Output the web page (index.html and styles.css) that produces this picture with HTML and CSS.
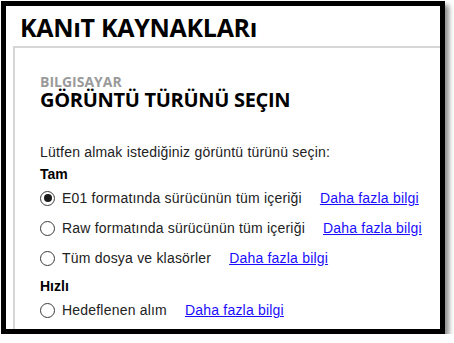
FILE: index.html
```html
<!DOCTYPE html>
<html lang="tr">
<head>
  <meta charset="UTF-8" />
  <title>Kanıt Kaynakları</title>
  <link rel="stylesheet" href="styles.css">
</head>
<body>
  <div class="frame">
    <h1 class="title">KANıT KAYNAKLARı</h1>

    <div class="panel">
      <div class="eyebrow">BILGISAYAR</div>
      <h2 class="heading">GÖRÜNTÜ TÜRÜNÜ SEÇIN</h2>

      <p class="prompt">Lütfen almak istediğiniz görüntü türünü seçin:</p>

      <div class="group">Tam</div>
      <label class="option">
        <span class="radio checked"></span>
        <span class="label">E01 formatında sürücünün tüm içeriği</span>
        <a href="#">Daha fazla bilgi</a>
      </label>
      <label class="option">
        <span class="radio"></span>
        <span class="label">Raw formatında sürücünün tüm içeriği</span>
        <a href="#">Daha fazla bilgi</a>
      </label>
      <label class="option">
        <span class="radio"></span>
        <span class="label">Tüm dosya ve klasörler</span>
        <a href="#">Daha fazla bilgi</a>
      </label>

      <div class="group">Hızlı</div>
      <label class="option">
        <span class="radio"></span>
        <span class="label">Hedeflenen alım</span>
        <a href="#">Daha fazla bilgi</a>
      </label>
    </div>
  </div>
</body>
</html>
```

FILE: styles.css
```css
body {
  margin: 0;
  background: #fff;
  font-family: "Liberation Sans", Arial, sans-serif;
}
.frame {
  margin: 1px 0 0 1px;
  width: 434px;
  height: 323px;
  border: 5px solid #000;
  background: #fff;
  box-shadow: 4px 4px 5px rgba(0,0,0,0.45);
  overflow: hidden;
}
.title {
  margin: 0;
  padding: 4px 0 1px 14px;
  height: 35px;
  font-family: "Open Sans", "Noto Sans", sans-serif;
  font-size: 25px;
  font-weight: bold;
  letter-spacing: -0.3px;
  line-height: 35px;
  color: #000;
}
.panel {
  margin-left: 7px;
  border-top: 2px solid #d6d6d6;
  border-left: 2px solid #d6d6d6;
  padding: 27px 0 0 25px;
  height: 300px;
}
.eyebrow {
  font-family: "Open Sans", "Noto Sans", sans-serif;
  font-size: 14px;
  font-weight: bold;
  color: #9a9a9a;
  line-height: 14px;
}
.heading {
  margin: 0;
  font-family: "Open Sans", "Noto Sans", sans-serif;
  font-size: 20px;
  font-weight: bold;
  line-height: 22px;
  letter-spacing: -0.3px;
  color: #000;
}
.prompt {
  margin: 32px 0 0;
  font-size: 14px;
  line-height: 18px;
  letter-spacing: 0.2px;
  color: #222;
}
.group {
  font-size: 14px;
  font-weight: bold;
  line-height: 18px;
  margin-top: 4px;
  color: #000;
}
.option {
  display: flex;
  align-items: center;
  height: 30px;
  font-size: 14px;
  letter-spacing: 0.2px;
  color: #222;
}
.radio {
  box-sizing: border-box;
  width: 15px;
  height: 15px;
  border: 1.3px solid #3a3a3a;
  border-radius: 50%;
  margin-right: 7px;
  display: flex;
  align-items: center;
  justify-content: center;
}
.radio.checked::after {
  content: "";
  width: 8px;
  height: 8px;
  border-radius: 50%;
  background: #1a1a1a;
}
.option a {
  margin-left: 18px;
  color: #1a0dff;
  text-decoration: underline;
}
```
